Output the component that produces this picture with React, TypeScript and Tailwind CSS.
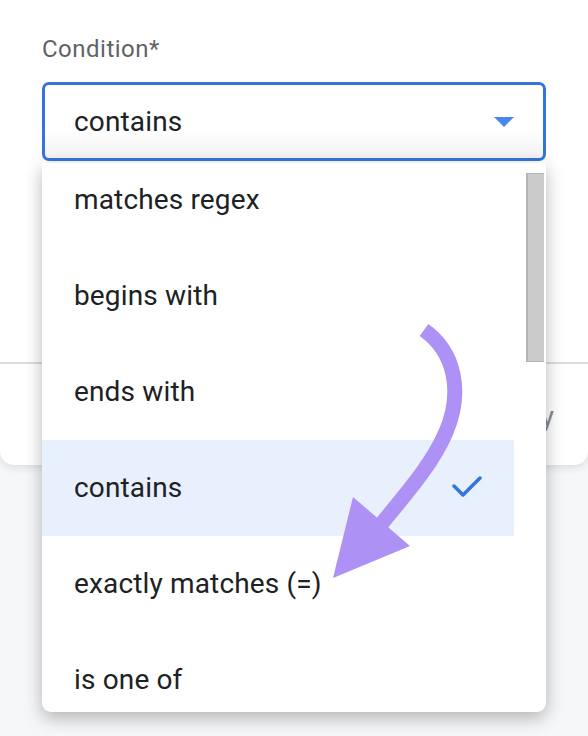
import React from "react";

const items = [
  "matches regex",
  "begins with",
  "ends with",
  "contains",
  "exactly matches (=)",
  "is one of",
];

export default function App() {
  return (
    <div
      className="relative w-[588px] h-[736px] overflow-hidden bg-[#f6f7f9]"
      style={{ fontFamily: "Roboto, 'Noto Sans', Arial, sans-serif" }}
    >
      {/* background card */}
      <div className="h-[465px] w-full rounded-b-[14px] bg-white shadow-[0_2px_10px_rgba(0,0,0,0.12)] flex flex-col">
        <div className="px-[42px] pt-[34px]">
          <div className="text-[24px] leading-[30px] text-[#5f6368] tracking-[0.5px]">Condition*</div>
          <div className="mt-[18px] h-[79px] rounded-[7px] border-[3px] border-[#3474dc] bg-gradient-to-b from-white from-60% to-[#f2f2f2] flex items-center justify-between pl-[29px] pr-[29px]">
            <span className="text-[28px] tracking-[0.15px] text-[#202124]">contains</span>
            <svg width="20" height="10" viewBox="0 0 20 10">
              <path d="M0 0 L20 0 L10 10 Z" fill="#4a86e8" />
            </svg>
          </div>
        </div>
        <div className="mt-[201px] h-[2px] bg-[#dadce0]" />
        <div className="flex justify-end pr-[34px] pt-[38px]">
          <span className="text-[28px] leading-[30px] text-[#8a8a8a]">Apply</span>
        </div>
      </div>

      {/* dropdown menu overlay */}
      <div className="absolute left-[42px] top-[163px] w-[504px] h-[549px] bg-white rounded-b-[9px] shadow-[0_6px_18px_rgba(0,0,0,0.28)] overflow-hidden">
        <div className="flex flex-col mt-[-11px] mr-[32px]">
          {items.map((t) => (
            <div
              key={t}
              className={`h-[96px] shrink-0 flex items-center justify-between pl-[32px] pr-[32px] ${
                t === "contains" ? "bg-[#e8effd]" : ""
              }`}
            >
              <span className="text-[28px] tracking-[0.15px] text-[#202124]">{t}</span>
              {t === "contains" && (
                <svg width="32" height="24" viewBox="0 0 32 24" className="mr-[-2px]">
                  <path d="M2 10 L11 19 L28 2" fill="none" stroke="#3474dc" strokeWidth="3.5" strokeLinecap="round" strokeLinejoin="round" />
                </svg>
              )}
            </div>
          ))}
        </div>
        {/* scrollbar thumb */}
        <div className="absolute right-[2px] top-[10px] w-[18px] h-[189px] bg-[#cbcbcb] border-l-[2px] border-t border-b border-[#b4b4b4]" />
      </div>

      {/* purple annotation arrow */}
      <svg className="absolute left-0 top-0" width="588" height="736" viewBox="0 0 588 736">
        <path
          d="M424 330 C455 352 463 392 446 432 C432 465 405 495 378 528"
          fill="none"
          stroke="#ae91f4"
          strokeWidth="15"
        />
        <path d="M333 578 L353 497 L410 546 Z" fill="#ae91f4" />
      </svg>
    </div>
  );
}
